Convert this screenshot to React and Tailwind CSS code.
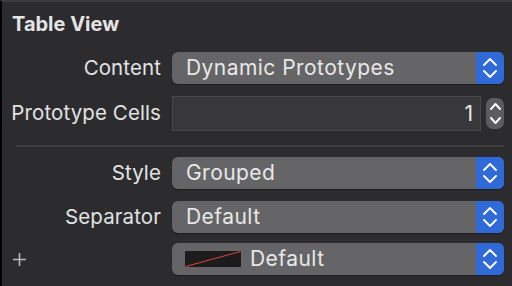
const Chevrons = ({ w, h, gap }) => (
  <svg width={w + 2} height={h * 2 + gap + 2} viewBox={`-1 -1 ${w + 2} ${h * 2 + gap + 2}`}>
    <path
      d={`M0 ${h}L${w / 2} 0L${w} ${h}M0 ${h + gap}L${w / 2} ${h * 2 + gap}L${w} ${h + gap}`}
      fill="none"
      stroke="white"
      strokeWidth="1.9"
      strokeLinecap="round"
      strokeLinejoin="round"
    />
  </svg>
)

const Popup = ({ children }) => (
  <div className="flex h-[32px] flex-1 items-center rounded-[6px] bg-[#656567] shadow-[0_1px_1px_rgba(0,0,0,0.35)]">
    <div className="flex flex-1 items-center pl-[14px] text-[21px] tracking-[0.45px] text-[#e8e8e8]">
      {children}
    </div>
    <div className="flex h-full w-[28px] items-center justify-center rounded-r-[6px] bg-[#2f6ad8]">
      <Chevrons w={12} h={6} gap={6} />
    </div>
  </div>
)

const Row = ({ label, children, className = '' }) => (
  <div className={'flex items-center ' + className}>
    <div className="w-[159px] shrink-0 text-right text-[20.5px] tracking-[0.1px] text-[#e2e2e2]">
      {label}
    </div>
    <div className="ml-[11px] flex flex-1 items-center">{children}</div>
  </div>
)

export default function App() {
  return (
    <div
      className="flex h-[286px] w-[512px] flex-col border-l-2 border-t-2 border-l-black border-t-[#3c3c40] bg-[#2c2c2f] pr-[8px]"
      style={{ fontFamily: 'Inter, "Noto Sans", sans-serif' }}
    >
      <div className="pl-[10px] pt-[11px] text-[20px] font-bold leading-[22px] text-[#e4e4e4]">
        Table View
      </div>

      <Row label="Content" className="mt-[17px]">
        <Popup>Dynamic Prototypes</Popup>
      </Row>

      <Row label="Prototype Cells" className="mt-[12px]">
        <div className="flex h-[35px] flex-1 items-center justify-end border border-[#48484b] bg-[#38383b] pr-[7px] text-[21px] text-[#e8e8e8]">
          1
        </div>
        <div className="ml-[5px] flex h-[31px] w-[18px] items-center justify-center rounded-[7px] bg-[#5c5c5f]">
          <Chevrons w={9} h={5} gap={9} />
        </div>
      </Row>

      <div className="ml-[14px] mt-[14px] h-[2px] bg-[#3e3e42]" />

      <Row label="Style" className="mt-[10px]">
        <Popup>Grouped</Popup>
      </Row>

      <Row label="Separator" className="mt-[12px]">
        <Popup>Default</Popup>
      </Row>

      <Row
        label={
          <div className="flex justify-start pl-[10px]">
            <svg width="15" height="15" viewBox="0 0 15 15">
              <path d="M7.5 1v13M1 7.5h13" stroke="#b8b8b8" strokeWidth="1.6" />
            </svg>
          </div>
        }
        className="mt-[10px]"
      >
        <Popup>
          <svg width="56" height="16" viewBox="0 0 56 16" className="-ml-[1px]">
            <rect width="56" height="16" fill="#1c1c1c" />
            <path d="M0.5 15.5L55.5 0.5" stroke="#e2433a" strokeWidth="1" />
          </svg>
          <span className="ml-[9px]">Default</span>
        </Popup>
      </Row>
    </div>
  )
}
